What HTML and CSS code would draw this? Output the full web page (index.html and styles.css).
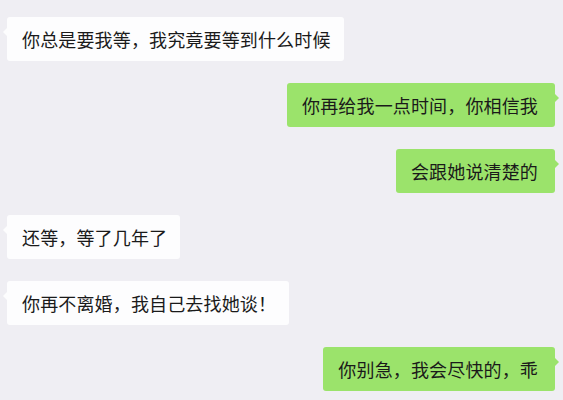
FILE: index.html
```html
<!DOCTYPE html>
<html lang="zh">
<head>
<meta charset="utf-8">
<link rel="stylesheet" href="styles.css">
</head>
<body>
<div class="chat">
  <div class="row left"><div class="bubble">你总是要我等，我究竟要等到什么时候</div></div>
  <div class="row right"><div class="bubble">你再给我一点时间，你相信我</div></div>
  <div class="row right"><div class="bubble">会跟她说清楚的</div></div>
  <div class="row left"><div class="bubble">还等，等了几年了</div></div>
  <div class="row left"><div class="bubble">你再不离婚，我自己去找她谈！</div></div>
  <div class="row right"><div class="bubble">你别急，我会尽快的，乖</div></div>
</div>
</body>
</html>
```
FILE: styles.css
```css
html, body {
  margin: 0;
  padding: 0;
  background: #efeef3;
  width: 563px;
  height: 400px;
  overflow: hidden;
}
.chat {
  display: flex;
  flex-direction: column;
  gap: 22px;
  padding: 17px 8px 0 7px;
  font-family: "Noto Sans CJK SC", "Noto Sans", sans-serif;
  font-size: 18px;
  letter-spacing: 0.15px;
  color: #1a1a1a;
}
.row {
  display: flex;
}
.row.right {
  justify-content: flex-end;
}
.bubble {
  position: relative;
  height: 44px;
  line-height: 44px;
  border-radius: 3px;
  white-space: nowrap;
  box-sizing: border-box;
}
.left .bubble {
  background: #fdfdfe;
  padding: 0 13px 0 15px;
}
.right .bubble {
  background: #9be36b;
  padding: 0 17px 0 15px;
}
.bubble::after {
  content: "";
  position: absolute;
  top: 11px;
  width: 0;
  height: 0;
  border-top: 4px solid transparent;
  border-bottom: 4px solid transparent;
}
.left .bubble::after {
  left: -4px;
  border-right: 4px solid #fdfdfe;
}
.right .bubble::after {
  right: -4px;
  border-left: 4px solid #9be36b;
}
```
